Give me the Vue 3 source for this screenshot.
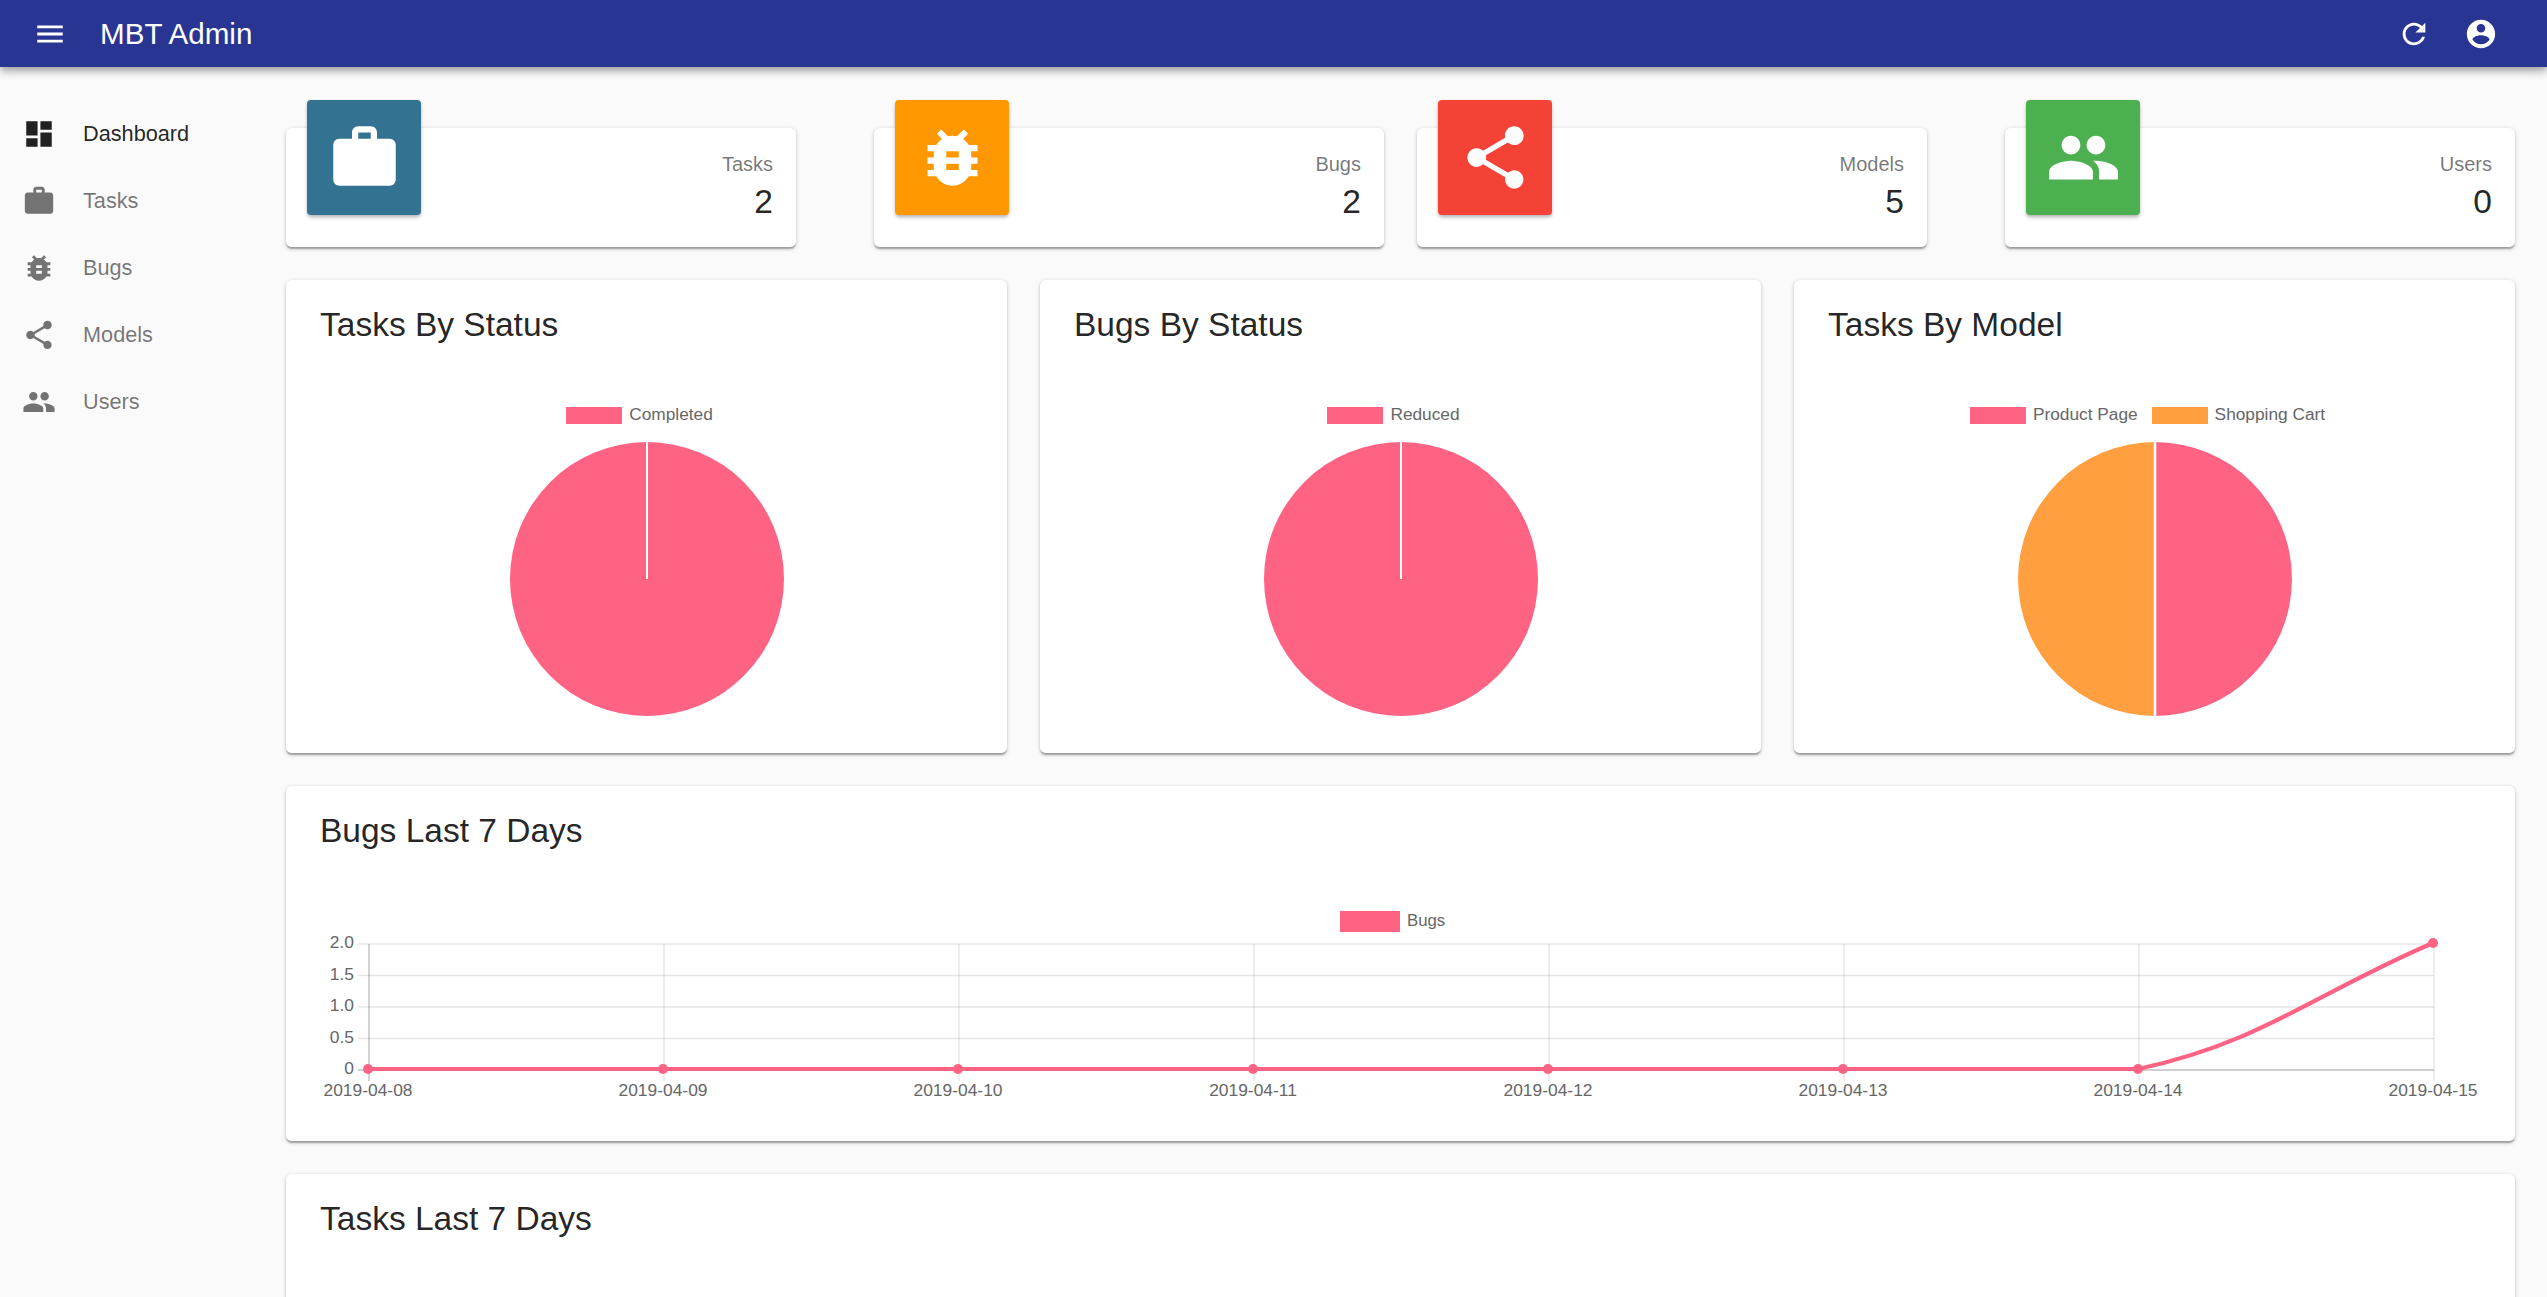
<template>
  <div class="page">
    <header class="appbar">
      <svg class="icon menu-btn" viewBox="0 0 24 24"><path :d="icons.menu" /></svg>
      <h1 class="brand">MBT Admin</h1>
      <div class="spacer"></div>
      <svg class="icon bar-icon" viewBox="0 0 24 24"><path :d="icons.refresh" /></svg>
      <svg class="icon bar-icon" viewBox="0 0 24 24"><path :d="icons.account" /></svg>
    </header>

    <div class="body-row">
      <nav class="sidebar">
        <div v-for="item in navItems" :key="item.label" class="nav-item" :class="{ active: item.active }">
          <svg class="icon nav-icon" viewBox="0 0 24 24"><path :d="icons[item.icon]" /></svg>
          <span>{{ item.label }}</span>
        </div>
      </nav>

      <main class="content">
        <section class="stats">
          <div v-for="(pair, i) in statPairs" :key="i" class="stat-pair">
            <div v-for="stat in pair" :key="stat.label" class="card stat-card">
              <div class="stat-box" :class="stat.cls">
                <svg class="icon" viewBox="0 0 24 24"><path :d="icons[stat.icon]" /></svg>
              </div>
              <div class="stat-label">{{ stat.label }}</div>
              <div class="stat-value">{{ stat.value }}</div>
            </div>
          </div>
        </section>

        <section class="pies">
          <div v-for="pie in pies" :key="pie.title" class="card pie-card">
            <h2 class="card-title">{{ pie.title }}</h2>
            <div class="legend">
              <div v-for="l in pie.legend" :key="l.label" class="legend-item">
                <span class="swatch" :class="l.cls"></span>
                <span class="legend-text">{{ l.label }}</span>
              </div>
            </div>
            <svg class="pie" viewBox="0 0 276 276">
              <template v-if="pie.legend.length === 1">
                <circle cx="138" cy="138" r="137" fill="#ff6384" />
                <line x1="138" y1="1" x2="138" y2="138" stroke="#fff" stroke-width="2" />
              </template>
              <template v-else>
                <path d="M138 1A137 137 0 0 1 138 275Z" fill="#ff6384" />
                <path d="M138 275A137 137 0 0 1 138 1Z" fill="#ff9f40" />
                <line x1="138" y1="1" x2="138" y2="275" stroke="#fff" stroke-width="2.6" />
              </template>
            </svg>
          </div>
        </section>

        <section class="card line-card">
          <h2 class="card-title">Bugs Last 7 Days</h2>
          <svg class="line-chart" viewBox="0 0 2229 265" width="2229" height="265">
            <rect x="1054" y="35" width="60" height="21" fill="#ff6384" />
            <text x="1121" y="50" class="legend-tick">Bugs</text>

            <line v-for="g in yGrid" :key="g.label" :x1="plot.left - 11" :x2="plot.right" :y1="g.y" :y2="g.y" class="grid" :class="{ axis: g.label === '0' }" />
            <line v-for="(g, i) in xGrid" :key="g.label" :x1="g.x" :x2="g.x" :y1="plot.top" :y2="plot.bottom + 11" class="grid" :class="{ axis: i === 0 }" />

            <text v-for="g in yGrid" :key="'y' + g.label" :x="plot.left - 15" :y="g.y + 4" text-anchor="end" class="tick">{{ g.label }}</text>
            <text v-for="g in xGrid" :key="'x' + g.label" :x="g.x - 1" :y="plot.bottom + 26" text-anchor="middle" class="tick">{{ g.label }}</text>

            <path :d="linePath" class="series" />
            <circle v-for="p in points" :key="p.x" :cx="p.x" :cy="p.y" r="5" fill="#ff6384" />
          </svg>
        </section>

        <section class="card last-card">
          <h2 class="card-title">Tasks Last 7 Days</h2>
        </section>
      </main>
    </div>
  </div>
</template>

<script setup>
const icons = {
  menu: 'M3 18h18v-2H3v2zm0-5h18v-2H3v2zm0-7v2h18V6H3z',
  refresh: 'M17.65 6.35C16.2 4.9 14.21 4 12 4c-4.42 0-7.99 3.58-7.99 8s3.57 8 7.99 8c3.73 0 6.84-2.55 7.73-6h-2.08c-.82 2.33-3.04 4-5.65 4-3.31 0-6-2.69-6-6s2.69-6 6-6c1.66 0 3.14.69 4.22 1.78L13 11h7V4l-2.35 2.35z',
  account: 'M12 2C6.48 2 2 6.48 2 12s4.48 10 10 10 10-4.48 10-10S17.52 2 12 2zm0 3c1.66 0 3 1.34 3 3s-1.34 3-3 3-3-1.34-3-3 1.34-3 3-3zm0 14.2c-2.5 0-4.71-1.28-6-3.22.03-1.99 4-3.08 6-3.08 1.99 0 5.97 1.09 6 3.08-1.29 1.94-3.5 3.22-6 3.22z',
  dashboard: 'M3 13h8V3H3v10zm0 8h8v-6H3v6zm10 0h8V11h-8v10zm0-18v6h8V3h-8z',
  work: 'M20 6h-4V4c0-1.11-.89-2-2-2h-4c-1.11 0-2 .89-2 2v2H4c-1.11 0-1.99.89-1.99 2L2 19c0 1.11.89 2 2 2h16c1.11 0 2-.89 2-2V8c0-1.11-.89-2-2-2zm-6 0h-4V4h4v2z',
  bug: 'M20 8h-2.81c-.45-.78-1.07-1.45-1.82-1.96L17 4.41 15.59 3l-2.17 2.17C12.96 5.06 12.49 5 12 5c-.49 0-.96.06-1.41.17L8.41 3 7 4.41l1.62 1.63C7.88 6.55 7.26 7.22 6.81 8H4v2h2.09c-.05.33-.09.66-.09 1v1H4v2h2v1c0 .34.04.67.09 1H4v2h2.81c1.04 1.79 2.97 3 5.19 3s4.15-1.21 5.19-3H20v-2h-2.09c.05-.33.09-.66.09-1v-1h2v-2h-2v-1c0-.34-.04-.67-.09-1H20V8zm-6 8h-4v-2h4v2zm0-4h-4v-2h4v2z',
  share: 'M18 16.08c-.76 0-1.44.3-1.96.77L8.91 12.7c.05-.23.09-.46.09-.7s-.04-.47-.09-.7l7.05-4.11c.54.5 1.25.81 2.04.81 1.66 0 3-1.34 3-3s-1.34-3-3-3-3 1.34-3 3c0 .24.04.47.09.7L8.04 9.81C7.5 9.31 6.79 9 6 9c-1.66 0-3 1.34-3 3s1.34 3 3 3c.79 0 1.5-.31 2.04-.81l7.12 4.16c-.05.21-.08.43-.08.65 0 1.61 1.31 2.92 2.92 2.92 1.61 0 2.92-1.31 2.92-2.92s-1.31-2.92-2.92-2.92z',
  people: 'M16 11c1.66 0 2.99-1.34 2.99-3S17.66 5 16 5c-1.66 0-3 1.34-3 3s1.34 3 3 3zm-8 0c1.66 0 2.99-1.34 2.99-3S9.66 5 8 5C6.34 5 5 6.34 5 8s1.34 3 3 3zm0 2c-2.33 0-7 1.17-7 3.5V19h14v-2.5c0-2.33-4.67-3.5-7-3.5zm8 0c-.29 0-.62.02-.97.05 1.16.84 1.97 1.97 1.97 3.45V19h6v-2.5c0-2.33-4.67-3.5-7-3.5z'
}

const navItems = [
  { label: 'Dashboard', icon: 'dashboard', active: true },
  { label: 'Tasks', icon: 'work' },
  { label: 'Bugs', icon: 'bug' },
  { label: 'Models', icon: 'share' },
  { label: 'Users', icon: 'people' }
]

const statPairs = [
  [
    { label: 'Tasks', value: 2, icon: 'work', cls: 'teal' },
    { label: 'Bugs', value: 2, icon: 'bug', cls: 'orange' }
  ],
  [
    { label: 'Models', value: 5, icon: 'share', cls: 'red' },
    { label: 'Users', value: 0, icon: 'people', cls: 'green' }
  ]
]

const pies = [
  { title: 'Tasks By Status', legend: [{ label: 'Completed', cls: 'pink' }] },
  { title: 'Bugs By Status', legend: [{ label: 'Reduced', cls: 'pink' }] },
  {
    title: 'Tasks By Model',
    legend: [
      { label: 'Product Page', cls: 'pink' },
      { label: 'Shopping Cart', cls: 'amber' }
    ]
  }
]

// координаты графика внутри svg
const plot = { left: 83, right: 2148, top: 68, bottom: 194 }
const step = (plot.right - plot.left) / 7

const dates = ['08', '09', '10', '11', '12', '13', '14', '15']
const xGrid = dates.map((d, i) => ({ label: '2019-04-' + d, x: plot.left + step * i }))
const yGrid = ['2.0', '1.5', '1.0', '0.5', '0'].map((label, i) => ({
  label,
  y: plot.top + ((plot.bottom - plot.top) / 4) * i
}))

const values = [0, 0, 0, 0, 0, 0, 0, 2]
const points = values.map((v, i) => ({
  x: plot.left + step * i - 1,
  y: plot.bottom - 1 - (v / 2) * (plot.bottom - plot.top)
}))

const last = points[7]
const prev = points[6]
const linePath =
  `M${points[0].x} ${points[0].y}L${prev.x} ${prev.y}` +
  `C${prev.x + 123} ${prev.y - 26.3} ${last.x - 118} ${last.y + 50.4} ${last.x} ${last.y}`
</script>

<style scoped>
.page {
  font-family: "Liberation Sans", Arial, sans-serif;
  color: rgba(0, 0, 0, 0.87);
  background: #fafafa;
  height: 100vh;
  overflow: hidden;
}

.icon {
  fill: currentColor;
  display: block;
  flex-shrink: 0;
}

.appbar {
  position: relative;
  z-index: 2;
  height: 67px;
  display: flex;
  align-items: center;
  background: #283593;
  color: #fff;
  padding: 0 49px 0 33px;
  box-shadow: 0 3px 6px -1px rgba(0, 0, 0, 0.2), 0 6px 7px 0 rgba(0, 0, 0, 0.14), 0 1px 14px 0 rgba(0, 0, 0, 0.12);
}

.menu-btn {
  width: 34px;
  height: 34px;
}

.brand {
  margin: 0 0 0 33px;
  font-size: 29.6px;
  font-weight: 400;
}

.spacer {
  flex: 1;
}

.bar-icon {
  width: 34px;
  height: 34px;
  margin-left: 33px;
}

.body-row {
  display: flex;
}

.sidebar {
  width: 286px;
  flex-shrink: 0;
  padding-top: 33px;
  box-sizing: border-box;
}

.nav-item {
  height: 67px;
  display: flex;
  align-items: center;
  padding-left: 22px;
  font-size: 21.7px;
  color: rgba(0, 0, 0, 0.54);
}

.nav-item.active {
  color: rgba(0, 0, 0, 0.87);
}

.nav-icon {
  width: 34px;
  height: 34px;
  margin-right: 27px;
}

.content {
  flex: 1;
  min-width: 0;
  padding: 61px 32px 0 0;
  display: flex;
  flex-direction: column;
  gap: 33px;
}

.card {
  background: #fff;
  border-radius: 5.6px;
  box-shadow: 0 1.4px 4px 0 rgba(0, 0, 0, 0.2), 0 1.4px 1.4px 0 rgba(0, 0, 0, 0.14), 0 3px 1.4px -1.4px rgba(0, 0, 0, 0.12);
}

.stats {
  display: grid;
  grid-template-columns: 1fr 1fr;
  gap: 33px;
}

.stat-pair {
  display: flex;
  justify-content: space-between;
}

.stat-card {
  position: relative;
  width: 510px;
  height: 119px;
  box-sizing: border-box;
  padding: 22px 23px 0 0;
  text-align: right;
}

.stat-box {
  position: absolute;
  left: 21px;
  top: -28px;
  width: 114px;
  height: 115px;
  border-radius: 4px;
  color: #fff;
  display: flex;
  align-items: center;
  justify-content: center;
  box-shadow: 0 3px 5px -1px rgba(0, 0, 0, 0.2), 0 1.4px 3px 0 rgba(0, 0, 0, 0.14);
}

.stat-box .icon {
  width: 75px;
  height: 75px;
}

.teal {
  background: #337290;
}

.orange {
  background: #ff9800;
}

.red {
  background: #f44336;
}

.green {
  background: #4caf50;
}

.stat-label {
  font-size: 20px;
  line-height: 28px;
  color: rgba(0, 0, 0, 0.54);
}

.stat-value {
  font-size: 33.6px;
  line-height: 46px;
  margin-top: 1px;
}

.pies {
  display: grid;
  grid-template-columns: repeat(3, 1fr);
  gap: 33px;
}

.card-title {
  margin: 0;
  padding: 22px 34px;
  font-size: 33.5px;
  line-height: 46px;
  font-weight: 400;
}

.pie-card {
  height: 473px;
  display: flex;
  flex-direction: column;
  align-items: stretch;
}

.legend {
  margin-top: 37px;
  height: 17px;
  padding-right: 14px;
  display: flex;
  justify-content: center;
  gap: 14px;
  font-size: 17.3px;
  line-height: 17px;
  color: #666;
}

.legend-item {
  display: flex;
  align-items: center;
  gap: 7px;
}

.legend-text {
  margin-top: -2px;
}

.swatch {
  width: 56px;
  height: 17px;
}

.pink {
  background: #ff6384;
}

.amber {
  background: #ff9f40;
}

.pie {
  display: block;
  width: 276px;
  height: 276px;
  margin: 17px auto 0;
}

.line-card {
  height: 355px;
}

.line-chart {
  display: block;
}

.grid {
  stroke: rgba(0, 0, 0, 0.1);
  stroke-width: 1.4;
}

.grid.axis {
  stroke: rgba(0, 0, 0, 0.25);
}

.tick {
  font-family: "Liberation Sans", Arial, sans-serif;
  font-size: 17.4px;
  fill: #666;
}

.legend-tick {
  font-family: "Liberation Sans", Arial, sans-serif;
  font-size: 16.8px;
  fill: #666;
}

.series {
  fill: none;
  stroke: #ff6384;
  stroke-width: 4.2;
}

.last-card {
  height: 300px;
  flex-shrink: 0;
}
</style>

<style>
html,
body {
  margin: 0;
  overflow: hidden;
}
</style>
